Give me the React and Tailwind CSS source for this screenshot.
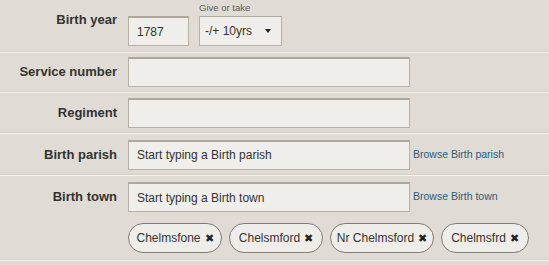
import React from "react";

const inputCls =
  "h-[30px] bg-[#f0eeea] border border-[#b7b0a6] border-t-2 border-t-[#aea79c] text-[12px] text-[#333] flex items-center px-2";

function Label({ children, className = "" }) {
  return (
    <div className={`w-[117px] shrink-0 text-right font-bold text-[13px] leading-[16px] text-[#333] ${className}`}>
      {children}
    </div>
  );
}

const rowCls =
  "flex border-b border-[#f6f4f0] shadow-[inset_0_-1px_0_#d3cec6]";

function Chip({ label, w }) {
  return (
    <div
      className="h-[30px] rounded-full border border-[#7f7b75] bg-[#efede9] flex items-center justify-center gap-[4px] text-[12px] text-[#333] shrink-0"
      style={{ width: w }}
    >
      <span>{label}</span>
      <span className="text-[11px] text-[#222] leading-none">✖</span>
    </div>
  );
}

export default function App() {
  return (
    <div
      className="w-[549px] h-[265px] bg-[#e0dcd5] overflow-hidden"
      style={{ fontFamily: '"Liberation Sans", Arial, sans-serif' }}
    >
      {/* Row 1 */}
      <div className={`${rowCls} h-[53px] items-start`}>
        <Label className="mt-[12px]">Birth year</Label>
        <div className={`${inputCls} ml-[11px] mt-[16px] w-[61px]`}>1787</div>
        <div className="ml-[10px] flex flex-col">
          <div className="h-[16px] pt-[3px] text-[9.5px] leading-[10px] text-[#5a5a5a]">Give or take</div>
          <div className={`${inputCls} w-[83px] !border-t pr-[10px] justify-between pl-[5px]`}>
            <span>-/+ 10yrs</span>
            <span className="w-0 h-0 border-l-[3px] border-r-[3px] border-t-[4px] border-l-transparent border-r-transparent border-t-[#222]" />
          </div>
        </div>
      </div>

      {/* Row 2 */}
      <div className={`${rowCls} h-[40px] items-center pb-[1px]`}>
        <Label>Service number</Label>
        <div className={`${inputCls} ml-[11px] w-[282px] h-[29px]`} />
      </div>

      {/* Row 3 */}
      <div className={`${rowCls} h-[41px] items-center`}>
        <Label>Regiment</Label>
        <div className={`${inputCls} ml-[11px] w-[282px] h-[28px]`} />
      </div>

      {/* Row 4 */}
      <div className={`${rowCls} h-[42px] items-center`}>
        <Label>Birth parish</Label>
        <div className={`${inputCls} ml-[11px] w-[282px]`}>Start typing a Birth parish</div>
        <a className="ml-[3px] text-[10.5px] text-[#2d5b7a]">Browse Birth parish</a>
      </div>

      {/* Row 5 */}
      <div className={`${rowCls} h-[85px] flex-col pt-[6px]`}>
        <div className="flex items-center">
          <Label>Birth town</Label>
          <div className={`${inputCls} ml-[11px] w-[282px]`}>Start typing a Birth town</div>
          <a className="ml-[3px] text-[10.5px] text-[#2d5b7a]">Browse Birth town</a>
        </div>
        <div className="flex ml-[128px] mt-[11px] gap-[7px]">
          <Chip label="Chelmsfone" w={94} />
          <Chip label="Chelsmford" w={94} />
          <Chip label="Nr Chelmsford" w={104} />
          <Chip label="Chelmsfrd" w={88} />
        </div>
      </div>
    </div>
  );
}
